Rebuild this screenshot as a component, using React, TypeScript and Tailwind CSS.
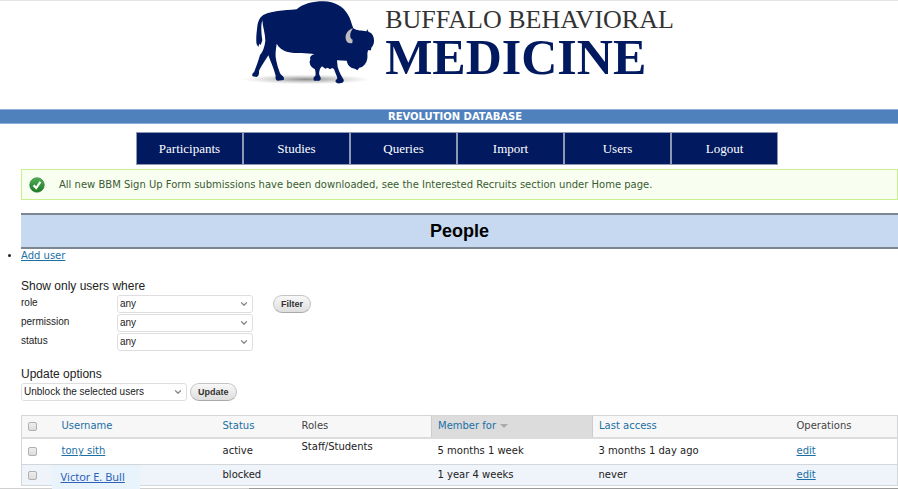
import React from "react";
import { ChevronDown } from "lucide-react";

const NAV_ITEMS = ["Participants", "Studies", "Queries", "Import", "Users", "Logout"];

const FILTERS = ["role", "permission", "status"];

const USERS = [
  {
    name: "tony sith",
    status: "active",
    roles: "Staff/Students",
    memberFor: "5 months 1 week",
    lastAccess: "3 months 1 day ago",
  },
  {
    name: "Victor E. Bull",
    status: "blocked",
    roles: "",
    memberFor: "1 year 4 weeks",
    lastAccess: "never",
    highlighted: true,
  },
];

function BisonLogo() {
  return (
    <svg className="w-[145px] h-[90px] shrink-0" viewBox="0 0 435 270" aria-hidden="true">
      <defs>
        <radialGradient id="ground">
          <stop offset="0" stopColor="#777" stopOpacity="0.85" />
          <stop offset="0.5" stopColor="#999" stopOpacity="0.45" />
          <stop offset="1" stopColor="#bbb" stopOpacity="0" />
        </radialGradient>
      </defs>
      <ellipse cx="198" cy="235" rx="196" ry="15" fill="url(#ground)" />
      <path
        fill="#00195f"
        d="M75 40C90 32 130 28 170 25C190 8 220 1 250 1C285 1 310 18 322 38C332 52 334 68 340 82C350 90 365 88 380 91L381 84L386 93C398 96 402 108 402 120C402 130 398 136 394 140L393 148L384 148L382 158C384 178 378 190 366 198L358 200L352 208L346 204L334 200C325 194 322 188 320 179L291 178L293 198C297 213 305 226 311 236C313 242 308 247 300 247C292 248 287 245 286 240L292 232C290 222 284 212 282 204L276 201L270 205L263 200L256 203L246 196L240 203C237 213 236 220 240 226C244 231 243 238 236 239L222 239C219 234 220 228 226 225C228 216 226 208 224 204C214 200 208 192 209 181L211 176L210 170C212 164 218 160 224 160C200 153 170 160 140 152C128 148 116 140 110 128C108 143 106 156 107 168C110 188 116 208 122 220C130 226 134 231 131 237L112 239C106 236 106 231 107 224C102 203 92 183 85 163C76 178 62 198 57 210C58 218 56 226 50 228L38 226C35 222 37 217 42 214C48 198 55 180 60 162C68 153 74 138 76 120C76 98 68 78 67 58C62 73 64 98 67 118L62 132L58 128L55 138L50 130C47 118 50 93 52 76C54 60 60 46 75 40Z"
      />
      <path
        fill="#bdbdbd"
        d="M339 82C325 86 315 98 317 113C319 125 328 129 337 126L338 116C328 112 328 98 339 82Z"
      />
    </svg>
  );
}

function SuccessIcon() {
  return (
    <svg className="size-4 shrink-0" viewBox="0 0 16 16" aria-hidden="true">
      <defs>
        <linearGradient id="badge" x1="0" y1="0" x2="0" y2="1">
          <stop offset="0" stopColor="#4fae55" />
          <stop offset="1" stopColor="#1f7a26" />
        </linearGradient>
      </defs>
      <circle cx="8" cy="8" r="7.3" fill="url(#badge)" stroke="#2c7a35" strokeWidth="0.6" />
      <path d="M4.6 8.2L7.2 11L11.4 4.8" fill="none" stroke="#fff" strokeWidth="2.2" />
    </svg>
  );
}

function Select({ id, label, value, width }: { id: string; label?: string; value: string; width: string }) {
  return (
    <div className={`relative ${width}`}>
      <select
        id={id}
        aria-label={label}
        className="block w-full h-[18px] appearance-none rounded-[3px] border border-[#dedede] bg-white pl-0.5 text-[10px] leading-4 text-[#222]"
      >
        <option>{value}</option>
      </select>
      <ChevronDown
        size={10}
        strokeWidth={3}
        className="pointer-events-none absolute right-1 top-1 text-[#888]"
      />
    </div>
  );
}

function PillButton({ children }: { children: React.ReactNode }) {
  return (
    <button
      type="button"
      className="h-[18px] rounded-full border border-[#c4c4c4] border-b-[#aaa] bg-linear-to-b from-[#f8f8f8] to-[#dedede] px-[7px] text-[9px] leading-4 font-bold text-[#333]"
    >
      {children}
    </button>
  );
}

function Checkbox({ label }: { label: string }) {
  return (
    <input
      type="checkbox"
      aria-label={label}
      className="block size-[9px] appearance-none rounded-[2px] border border-[#b0b0b0] bg-linear-to-b from-[#eee] to-[#dcdcdc]"
    />
  );
}

const link = "text-[#1a6fa5] underline";

export default function App() {
  return (
    <div className="border-t border-[#e3e3e3] bg-white font-['DejaVu_Sans',sans-serif] text-[10px] leading-4 text-[#222]">
      <header>
        <div className="flex h-[108px] items-start justify-center pl-4">
          <BisonLogo />
          <div className="pt-1 font-['Liberation_Serif',serif] whitespace-nowrap">
            <div className="text-[26px] leading-[30px] text-[#333]">BUFFALO BEHAVIORAL</div>
            <div className="text-[50px] leading-[44px] font-bold text-[#00195f]">MEDICINE</div>
          </div>
        </div>
        <div className="border-y border-[#8fb0dc] bg-[#4f81bd] pl-3 text-center text-[10px] leading-[13px] font-bold text-white">
          REVOLUTION DATABASE
        </div>
        <nav className="mt-2 flex justify-center pl-4">
          {NAV_ITEMS.map((item) => (
            <a
              key={item}
              href="#"
              className="w-[107px] border border-[#8f98b3] bg-[#00195f] text-center font-['Liberation_Serif',serif] text-[13px] leading-[31px] text-white"
            >
              {item}
            </a>
          ))}
        </nav>
      </header>

      <main className="pl-[21px]">
        <div className="mt-1 flex h-[31px] items-center gap-3.5 border border-[#c8f08f] bg-[#f8fff0] pl-[7px] text-[#3b5a35]">
          <SuccessIcon />
          <p>All new BBM Sign Up Form submissions have been downloaded, see the Interested Recruits section under Home page.</p>
        </div>

        <h1 className="mt-[13px] border-y-2 border-[#7d8590] bg-[#c6d9f1] text-center font-['Liberation_Sans',sans-serif] text-[18px] leading-8 font-bold text-black">
          People
        </h1>
        <ul className="list-disc leading-[14px]">
          <li>
            <a href="#" className={link}>Add user</a>
          </li>
        </ul>

        <form className="font-['Liberation_Sans',sans-serif]">
          <h2 className="mt-[15px] text-[12px] leading-4">Show only users where</h2>
          <div className="flex items-start gap-5">
            <div className="mt-px flex flex-col gap-px">
              {FILTERS.map((filter) => (
                <div key={filter} className="flex">
                  <label htmlFor={filter} className="w-24 text-[10px] leading-4">
                    {filter}
                  </label>
                  <Select id={filter} value="any" width="w-[136px]" />
                </div>
              ))}
            </div>
            <div className="mt-px flex">
              <PillButton>Filter</PillButton>
            </div>
          </div>

          <h2 className="mt-[15px] text-[12px] leading-4">Update options</h2>
          <div className="mt-px flex gap-[3px]">
            <Select id="operation" label="Update options" value="Unblock the selected users" width="w-[166px]" />
            <PillButton>Update</PillButton>
          </div>
        </form>

        <table className="mt-3.5 w-full table-fixed border-collapse border border-[#d3d7d9] text-left">
          <colgroup>
            <col className="w-[34px]" />
            <col className="w-[161px]" />
            <col className="w-[79px]" />
            <col className="w-[136px]" />
            <col className="w-[161px]" />
            <col className="w-[198px]" />
            <col />
          </colgroup>
          <thead>
            <tr className="h-[22px] border-b-2 border-[#dcdcdc] bg-[#f7f7f7] text-[#1a6fa5] [&>th]:p-0 [&>th]:pl-1.5 [&>th]:font-normal">
              <th>
                <Checkbox label="Select all users" />
              </th>
              <th>Username</th>
              <th>Status</th>
              <th className="text-[#444]">Roles</th>
              <th className="border-x border-[#ccc] bg-[#dcdcdc]">
                Member for
                <svg className="ml-1 inline-block h-1 w-2" viewBox="0 0 8 4" aria-hidden="true">
                  <path d="M0 0H8L4 4Z" fill="#aaa" />
                </svg>
              </th>
              <th>Last access</th>
              <th className="text-[#444]">Operations</th>
            </tr>
          </thead>
          <tbody>
            {USERS.map((user) => (
              <tr
                key={user.name}
                className={`border-b border-[#d3d7d9] [&>td]:p-0 [&>td]:pl-1.5 ${
                  user.highlighted ? "h-[21px] bg-[#eff3fa]" : "h-[27px]"
                }`}
              >
                <td>
                  <Checkbox label={`Select ${user.name}`} />
                </td>
                <td className="relative">
                  {user.highlighted ? (
                    <a
                      href="#"
                      className="absolute top-0 -left-1 w-[88px] bg-[#e9f3fc] pl-[9px] font-['Noto_Sans',sans-serif] text-[11px] leading-6 text-[#2e62b8] underline"
                    >
                      {user.name}
                    </a>
                  ) : (
                    <a href="#" className={link}>{user.name}</a>
                  )}
                </td>
                <td>{user.status}</td>
                <td className="align-top">{user.roles}</td>
                <td>{user.memberFor}</td>
                <td>{user.lastAccess}</td>
                <td>
                  <a href="#" className={link}>edit</a>
                </td>
              </tr>
            ))}
          </tbody>
        </table>
      </main>
      <footer className="mt-0.5 flex h-px">
        <div className="w-[249px] bg-[#d0d0d0]" />
        <div className="grow bg-[#999]" />
      </footer>
    </div>
  );
}
